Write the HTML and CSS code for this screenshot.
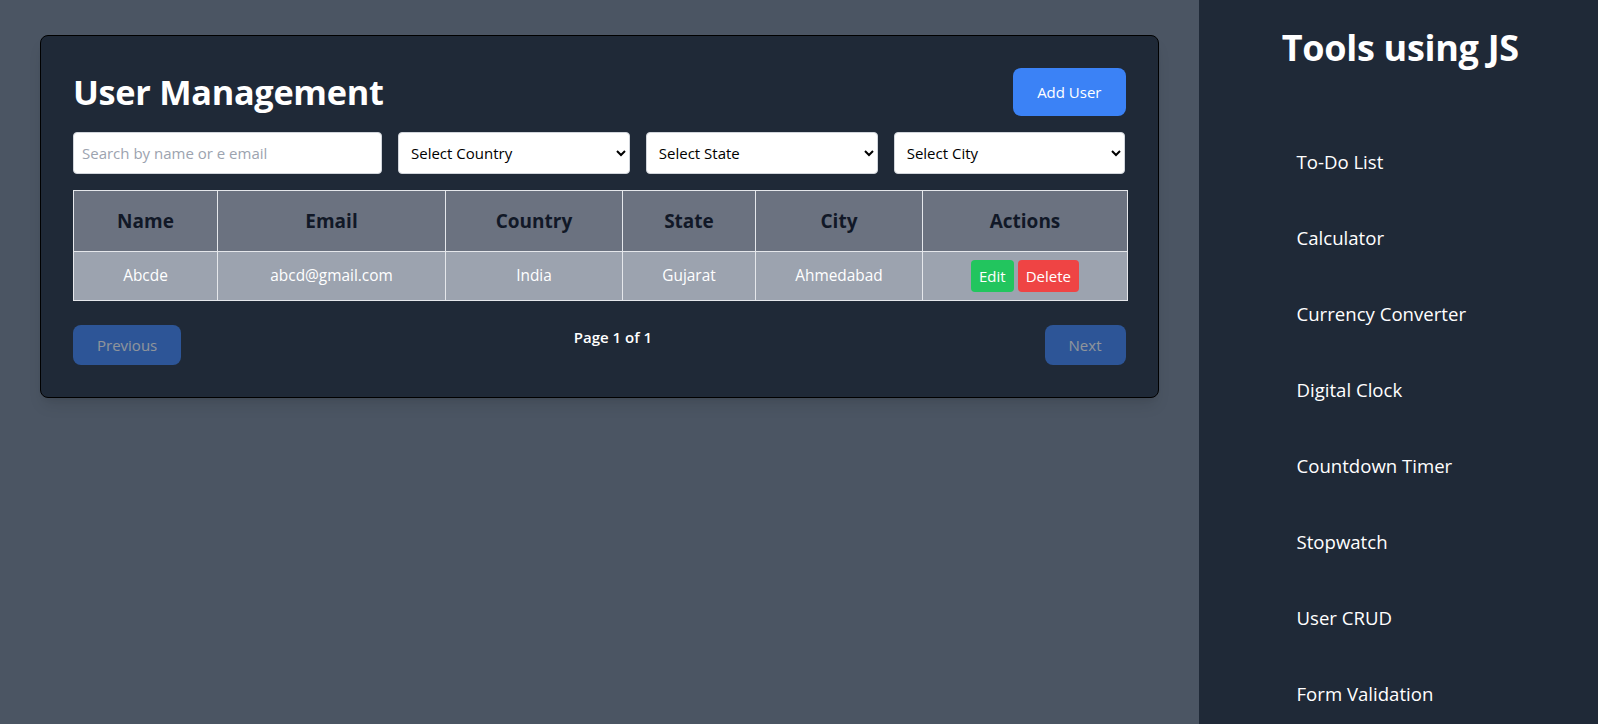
FILE: index.html
```html
<!DOCTYPE html>
<html lang="en">
<head>
<meta charset="UTF-8">
<title>User Management</title>
<link rel="stylesheet" href="styles.css">
</head>
<body>
<div class="layout">
  <main class="main">
    <div class="card">
      <div class="card-head">
        <h1 class="title">User Management</h1>
        <button class="btn-add">Add User</button>
      </div>
      <div class="filters">
        <input class="search" type="text" placeholder="Search by name or e email">
        <select class="pick"><option>Select Country</option></select>
        <select class="pick"><option>Select State</option></select>
        <select class="pick"><option>Select City</option></select>
      </div>
      <table class="users">
        <colgroup>
          <col class="c-name"><col class="c-email"><col class="c-country"><col class="c-state"><col class="c-city"><col class="c-actions">
        </colgroup>
        <thead>
          <tr><th>Name</th><th>Email</th><th>Country</th><th>State</th><th>City</th><th>Actions</th></tr>
        </thead>
        <tbody>
          <tr>
            <td>Abcde</td><td>abcd@gmail.com</td><td>India</td><td>Gujarat</td><td>Ahmedabad</td>
            <td><button class="btn-edit">Edit</button><button class="btn-del">Delete</button></td>
          </tr>
        </tbody>
      </table>
      <div class="pager">
        <button class="btn-page" disabled>Previous</button>
        <span class="page-info">Page 1 of 1</span>
        <button class="btn-page" disabled>Next</button>
      </div>
    </div>
  </main>
  <aside class="sidebar">
    <h2 class="side-title">Tools using JS</h2>
    <ul class="nav">
      <li><a href="#">To-Do List</a></li>
      <li><a href="#">Calculator</a></li>
      <li><a href="#">Currency Converter</a></li>
      <li><a href="#">Digital Clock</a></li>
      <li><a href="#">Countdown Timer</a></li>
      <li><a href="#">Stopwatch</a></li>
      <li><a href="#">User CRUD</a></li>
      <li><a href="#">Form Validation</a></li>
    </ul>
  </aside>
</div>
</body>
</html>
```
FILE: styles.css
```css
* { box-sizing: border-box; }
html, body { margin: 0; padding: 0; }
body {
  font-family: "Open Sans", "Noto Sans", sans-serif;
  background: #4b5563;
  color: #fff;
  height: 724px;
  overflow: hidden;
}
.layout { display: flex; height: 100vh; }
.main { width: 75%; padding: 35px 40px 0 40px; }
.card {
  background: #1f2937;
  border: 1px solid #000;
  border-radius: 8px;
  padding: 32px;
  box-shadow: 0 10px 15px -3px rgba(0,0,0,.1), 0 4px 6px -4px rgba(0,0,0,.1);
}
.card-head { display: flex; justify-content: space-between; align-items: center; margin-bottom: 16px; }
.title { margin: 0; font-size: 34.3px; line-height: 40px; font-weight: 700; color: #fff; letter-spacing: -0.3px; }
.btn-add {
  background: #3b82f6; color: #fff; border: 0; border-radius: 8px;
  font: inherit; font-size: 15px; line-height: 24px; padding: 12px 24px;
}
.filters { display: flex; gap: 16px; margin-bottom: 16px; }
.search, .pick {
  min-width: 0; height: 42px; border: 1px solid #d1d5db; border-radius: 4px;
  padding: 8px; font: inherit; font-size: 15px; line-height: 24px; background: #fff; color: #000;
}
.search { flex: 0 0 309px; }
.search::placeholder { color: #9ca3af; }
.pick { flex: 1 1 0; padding-left: 8px; }
.users { width: 100%; border-collapse: collapse; table-layout: fixed; }
.c-name { width: 144px; } .c-email { width: 228px; } .c-country { width: 177px; }
.c-state { width: 133px; } .c-city { width: 167px; } .c-actions { width: 205px; }
.users th, .users td { border: 1px solid #e5e7eb; text-align: center; }
.users th { background: #6b7280; color: #111827; font-size: 19px; line-height: 28px; font-weight: 700; padding: 16px; }
.users td { background: #9ca3af; color: #fff; font-size: 15.4px; line-height: 24px; padding: 8px; }
.btn-edit, .btn-del { border: 0; border-radius: 4px; color: #fff; font: inherit; font-size: 15px; line-height: 24px; padding: 4px 8px; }
.btn-edit { background: #22c55e; margin-right: 4px; }
.btn-del { background: #ef4444; }
.pager { display: flex; justify-content: space-between; margin-top: 24px; }
.btn-page {
  background: #3b82f6; color: #fff; border: 0; border-radius: 8px; opacity: .5;
  font: inherit; font-size: 15px; line-height: 24px; padding: 8px 24px;
}
.page-info { font-size: 15px; line-height: 24px; font-weight: 600; }
.sidebar { width: 25%; background: #1f2937; padding: 28px 24px; }
.side-title { margin: 0; padding-left: 4px; text-align: center; font-size: 36px; line-height: 40px; font-weight: 700; letter-spacing: -0.3px; }
.nav { list-style: none; margin: 56px 0 0; padding: 0 0 0 50px; }
.nav a { display: block; padding: 24px; color: #fff; text-decoration: none; font-size: 18.6px; line-height: 28px; }
```
